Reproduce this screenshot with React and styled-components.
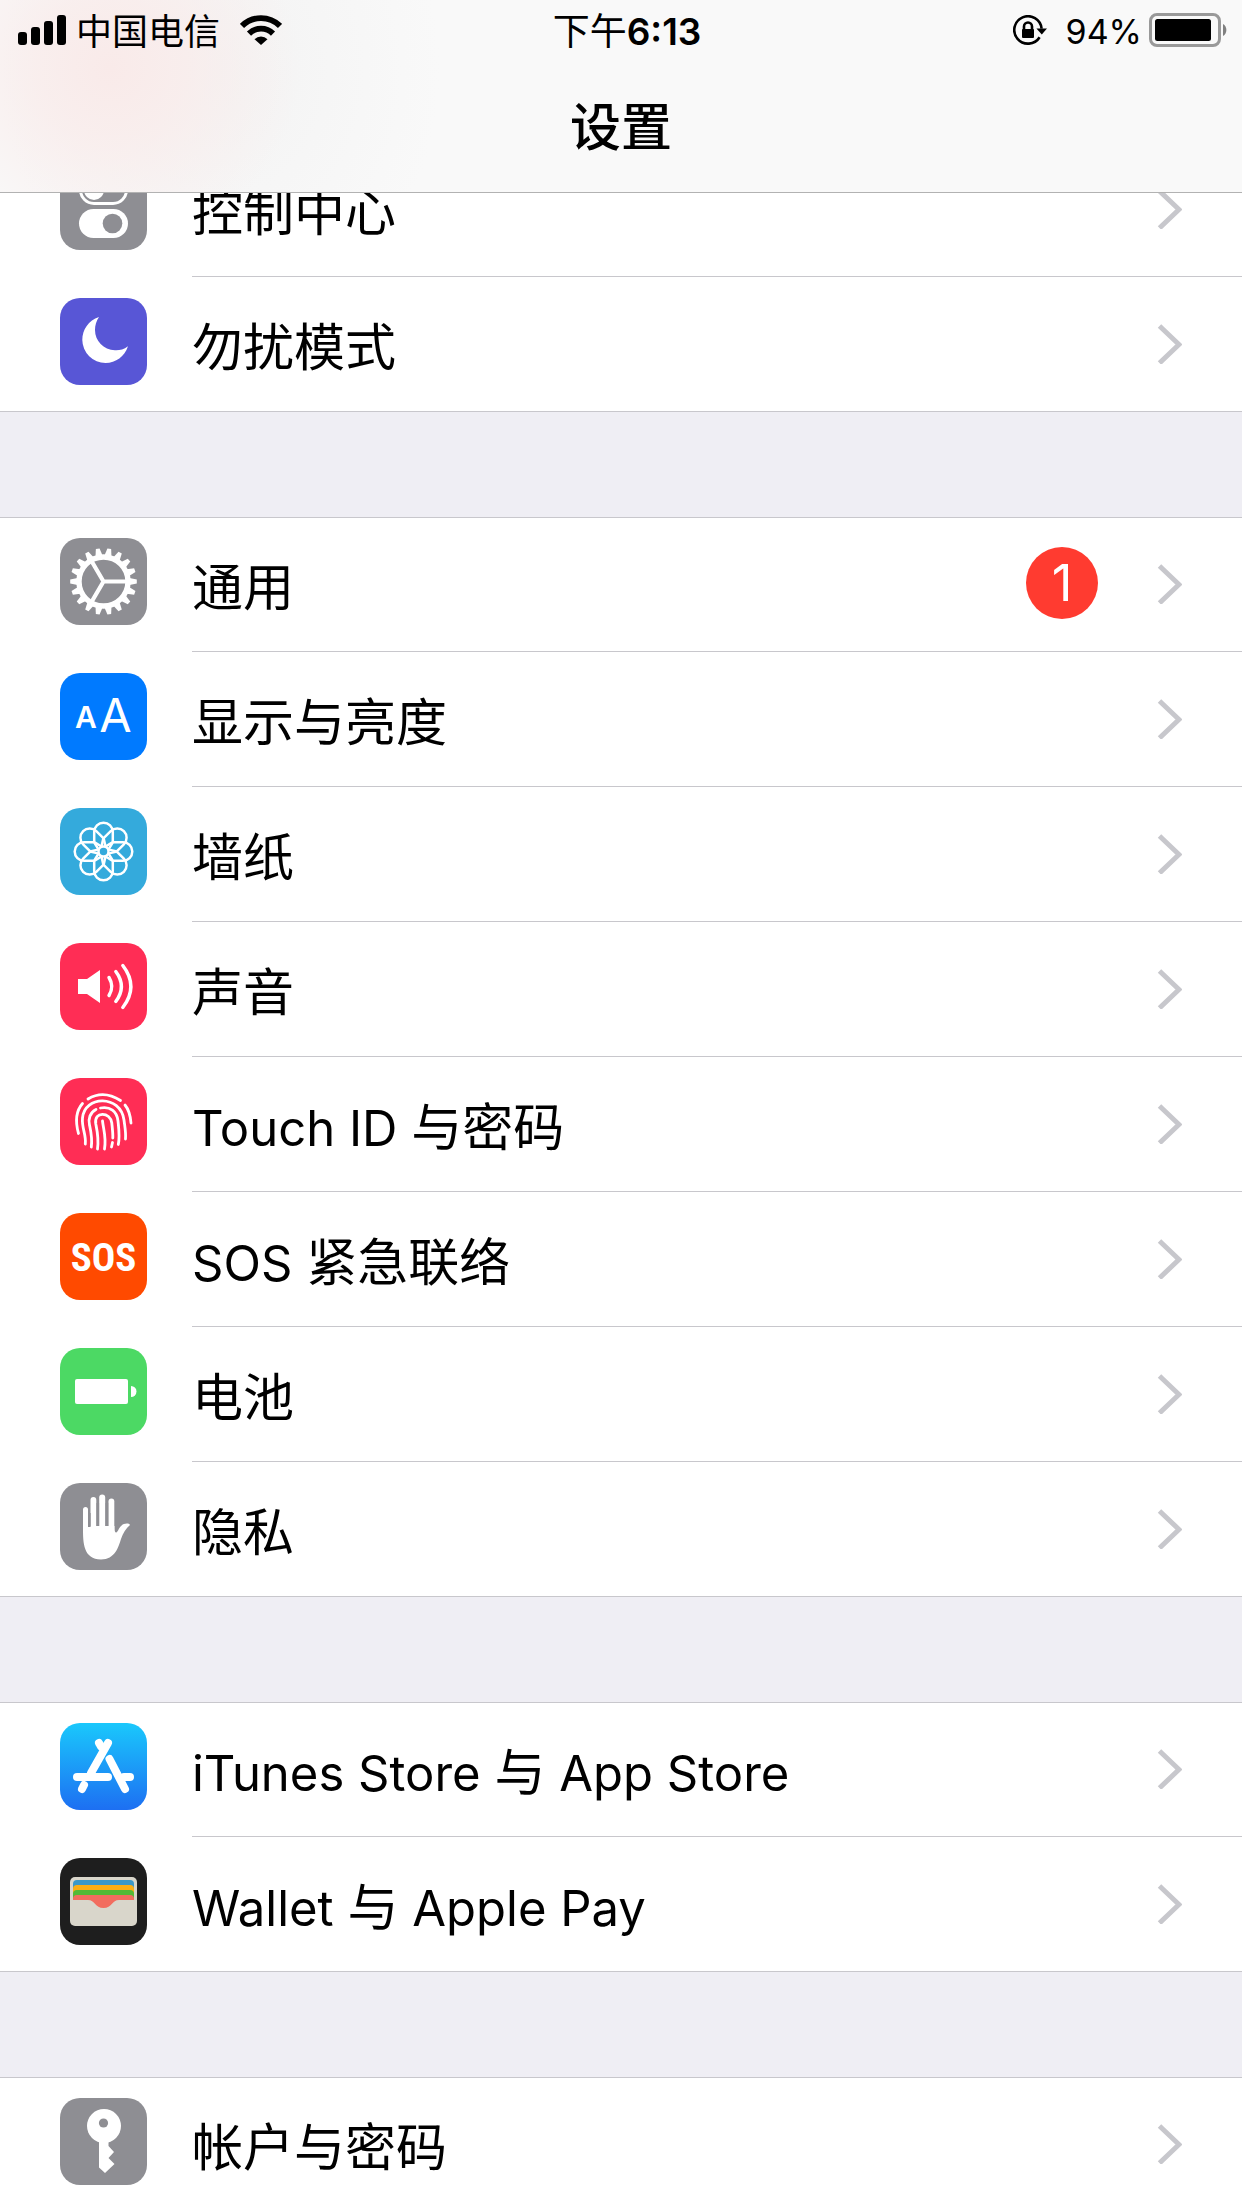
import React from "react";
import styled, { createGlobalStyle } from "styled-components";

const GlobalStyle = createGlobalStyle`
    * {
        box-sizing: border-box;
    }

    body {
        margin: 0;
        background: #efeef4;
        color: #000;
        font-family: Inter, "Noto Sans CJK SC", sans-serif;
    }
`;

const SignalIcon = () => (
    <svg width="48" height="30" viewBox="0 0 48 30" aria-hidden="true">
        <rect x="0" y="17" width="9" height="13" rx="3" />
        <rect x="13" y="12" width="9" height="18" rx="3" />
        <rect x="26" y="6" width="9" height="24" rx="3" />
        <rect x="39" y="0" width="9" height="30" rx="3" />
    </svg>
);

const WifiIcon = () => (
    <svg width="42" height="30" viewBox="0 0 42 30" aria-hidden="true">
        <g fill="none" stroke="#000" strokeWidth="5.8">
            <path d="M2 10.9A27 27 0 0 1 40 10.9" />
            <path d="M9 18.6A17 17 0 0 1 33 18.6" />
        </g>
        <path d="M14.5 24.2A9.2 9.2 0 0 1 27.5 24.2L21 30Z" />
    </svg>
);

const LockIcon = () => (
    <svg width="34" height="30" viewBox="0 0 34 30" aria-hidden="true">
        <g fill="none" stroke="#000" strokeWidth="2.6">
            <path d="M28.6 13.6A13.7 13.7 0 1 0 26.6 22.2" />
            <path d="M11 15V11.5a4 4 0 0 1 8 0v4" />
        </g>
        <path d="M23.4 13.6H34L28.8 19.6Z" />
        <rect x="9" y="14" width="12" height="9" rx="1" />
    </svg>
);

const StatusBatteryIcon = () => (
    <svg width="78" height="34" viewBox="0 0 78 34" aria-hidden="true">
        <rect
            x="1.5"
            y="1.5"
            width="69"
            height="31"
            rx="6.5"
            fill="none"
            stroke="#999"
            strokeWidth="3"
        />
        <rect x="6" y="6" width="56" height="22" rx="2.5" />
        <path d="M74 11a7 7 0 0 1 0 12Z" fill="#808080" />
    </svg>
);

const ChevronIcon = () => (
    <svg width="25" height="40" viewBox="0 0 25 40" aria-hidden="true">
        <path
            d="M2.5 2L22 20.5L2.5 39"
            fill="none"
            stroke="#c7c7cc"
            strokeWidth="5"
        />
    </svg>
);

const ControlGlyph = () => (
    <>
        <rect
            x="20.5"
            y="13.5"
            width="46"
            height="27"
            rx="13.5"
            fill="none"
            stroke="#fff"
            strokeWidth="3"
        />
        <circle cx="34" cy="27" r="10" fill="#fff" />
        <rect x="19" y="46" width="49" height="29" rx="14.5" fill="#fff" />
        <circle cx="52.5" cy="60.5" r="9.8" fill="#8e8e93" />
    </>
);

const MoonGlyph = () => (
    <path
        d="M39 19C28.5 22.5 22.3 31.5 22.3 42A23.3 23.3 0 0 0 45.5 65C56 65 64.5 58.5 68 48.3C63.5 51.6 59.5 52.5 55 52.3C43.5 51.8 35 43 35 32C35 27 36.3 23 39 19Z"
        fill="#fff"
    />
);

const GearGlyph = () => (
    <g stroke="#fff" fill="none">
        <circle cx="43.5" cy="43.5" r="24.5" strokeWidth="5.4" />
        {Array.from({ length: 18 }, (_, i) => (
            <path
                key={i}
                d="M69.5 40L76.8 41.6V45.4L69.5 47Z"
                fill="#fff"
                stroke="none"
                transform={`rotate(${i * 20} 43.5 43.5)`}
            />
        ))}
        <path
            d="M43.5 43.5H67M43.5 43.5L31.5 23M43.5 43.5L31.5 64"
            strokeWidth="4.2"
        />
    </g>
);

const TextSizeGlyph = () => (
    <g fill="#fff" fontFamily="Inter, sans-serif" textAnchor="middle">
        <text x="26" y="55" fontSize="30" fontWeight="600">
            A
        </text>
        <text x="55.5" y="59" fontSize="47" fontWeight="400">
            A
        </text>
    </g>
);

/* each petal is a capsule that tapers towards the centre */
const FlowerGlyph = () => (
    <g fill="none" stroke="#fff" strokeWidth="2.5">
        <circle cx="43.5" cy="43.5" r="5" />
        {Array.from({ length: 8 }, (_, i) => (
            <path
                key={i}
                d="M41.8 38.8L34.2 34V24A9.3 9.3 0 0 1 52.8 24V34L45.2 38.8"
                transform={`rotate(${i * 45} 43.5 43.5)`}
            />
        ))}
    </g>
);

const SoundGlyph = () => (
    <>
        <path d="M18 36H27L40 27V60L27 51H18Z" fill="#fff" />
        <g
            fill="none"
            stroke="#fff"
            strokeWidth="3.4"
            strokeLinecap="round"
        >
            <path d="M49 34.5Q54.5 43.5 49 52.5" />
            <path d="M55.8 28.5Q67 43.5 55.8 58.5" />
            <path d="M62.8 22.5Q79 43.5 62.8 64.5" />
        </g>
    </>
);

const FingerprintGlyph = () => (
    <g fill="none" stroke="#fff" strokeWidth="2.8" strokeLinecap="round">
        <path d="M28 21Q43.5 11.5 60.5 22.5" />
        <path d="M22.5 25.5C15.5 33.5 15 43 18.5 55.5" />
        <path d="M65 27Q70 33 71 45" />
        <path d="M25.3 66C26.5 57 21.5 50 22.5 40C24.5 17 60.5 16.5 64 42C65 50 66 54 65.5 61" />
        <path d="M36 31.5C30 34.5 28 41 29.5 47C31 54 32.5 60 31.3 69" />
        <path d="M40.5 30C50 28 57 33.5 58 43C58.8 51 60 59 58.3 66.5" />
        <path d="M37.5 71C39 60 37 52 35.8 46C33.5 33 50.5 33.5 51.8 45C52.3 50 53 55 52.8 60" />
        <path d="M42.5 43C43.5 52 46.5 59 44.5 71" />
        <path d="M52.5 64.5L51.5 69" />
    </g>
);

const SosGlyph = () => (
    <text
        x="43.5"
        y="57.5"
        fill="#fff"
        fontFamily='"Roboto Condensed", "Liberation Sans Narrow", Roboto, sans-serif'
        fontSize="39"
        fontWeight="700"
        textAnchor="middle"
    >
        SOS
    </text>
);

const BatteryGlyph = () => (
    <g fill="#fff">
        <rect x="15" y="31" width="53" height="25" rx="2" />
        <path d="M71 38A5.5 5.5 0 0 1 71 49Z" />
    </g>
);

const HandGlyph = () => (
    <g fill="#fff">
        <path d="M23 43C23 58 22.5 76.5 41 76.5C55 76.5 58.5 64 61 56C63 50 66 45.5 70 42C69 40 64 40 61 43C58.5 45.5 57.5 50 56 49.5C54.5 49 54.5 46 54.5 43Z" />
        <rect x="23" y="24" width="5" height="24" rx="2.5" />
        <rect x="30.5" y="14" width="5.8" height="34" rx="2.9" />
        <rect x="39.2" y="11.5" width="6" height="36" rx="3" />
        <rect x="48.5" y="15.5" width="5.8" height="34" rx="2.9" />
        <path
            d="M29.3 30V44M37.8 20V43M46.9 20V43"
            stroke="#8e8e93"
            strokeWidth="2.6"
        />
    </g>
);

const AppStoreGlyph = () => (
    <g stroke="#fff" strokeWidth="8" strokeLinecap="round" fill="none">
        <path d="M48 20L31 50" />
        <path d="M39 20L41 23.5" />
        <path d="M17 54H48" />
        <path d="M64 54H70" />
        <path d="M49.5 36L65 66" />
        <path d="M24 62L22 66" />
    </g>
);

const WalletGlyph = () => (
    <>
        <rect x="10" y="19" width="67" height="49" rx="5" fill="#d9d6cb" />
        <path d="M13 42V26a4 4 0 0 1 4-4H70a4 4 0 0 1 4 4V42Z" fill="#3c98c8" />
        <path d="M13 42V31a4 4 0 0 1 4-4H70a4 4 0 0 1 4 4V42Z" fill="#fdae14" />
        <path d="M13 42V36a4 4 0 0 1 4-4H70a4 4 0 0 1 4 4V42Z" fill="#53ba36" />
        <path
            d="M13 42V41a4 4 0 0 1 4-4H70a4 4 0 0 1 4 4V42H59C52 42 52 50 43.5 50S35 42 28 42Z"
            fill="#f26d5f"
        />
    </>
);

const KeyGlyph = () => (
    <>
        <circle cx="44" cy="28" r="17" fill="#fff" />
        <path
            d="M39 40V69.5L45 75L54.5 66L48.5 60L54 54L48.5 48V40Z"
            fill="#fff"
        />
        <circle cx="43.5" cy="25" r="4.6" fill="#8e8e93" />
    </>
);

const groups = [
    [
        { title: "控制中心", color: "#8e8e93", glyph: ControlGlyph },
        { title: "勿扰模式", color: "#5856d6", glyph: MoonGlyph },
    ],
    [
        { title: "通用", color: "#8e8e93", glyph: GearGlyph, badge: 1 },
        { title: "显示与亮度", color: "#007aff", glyph: TextSizeGlyph },
        { title: "墙纸", color: "#34aadc", glyph: FlowerGlyph },
        { title: "声音", color: "#ff2d55", glyph: SoundGlyph },
        { title: "Touch ID 与密码", color: "#ff2d55", glyph: FingerprintGlyph },
        { title: "SOS 紧急联络", color: "#ff4a00", glyph: SosGlyph },
        { title: "电池", color: "#4cd964", glyph: BatteryGlyph },
        { title: "隐私", color: "#8e8e93", glyph: HandGlyph },
    ],
    [
        {
            title: "iTunes Store 与 App Store",
            color: "linear-gradient(#1ac8fc, #1d6ff2)",
            glyph: AppStoreGlyph,
        },
        { title: "Wallet 与 Apple Pay", color: "#1e1e1e", glyph: WalletGlyph },
    ],
    [{ title: "帐户与密码", color: "#8e8e93", glyph: KeyGlyph }],
];

/* latin runs are set a little smaller than the chinese ones */
const MixedText = ({ children }) =>
    children
        .split(/([\x20-\x7e]+)/)
        .filter(Boolean)
        .map((run, index) =>
            /^[\x20-\x7e]/.test(run) ? (
                <Latin key={`run-${index}`}>{run}</Latin>
            ) : (
                run
            )
        );

const SettingsRow = ({ title, color, glyph: Glyph, badge }) => (
    <li>
        <RowLink href="#">
            <IconTile color={color}>
                <svg width="87" height="87" viewBox="0 0 87 87" aria-hidden="true">
                    <Glyph />
                </svg>
            </IconTile>
            <RowBody>
                <RowTitle>
                    <MixedText>{title}</MixedText>
                </RowTitle>
                {badge && <Badge>{badge}</Badge>}
                <ChevronIcon />
            </RowBody>
        </RowLink>
    </li>
);

export default function App() {
    return (
        <Screen>
            <GlobalStyle />
            <Header>
                <StatusBar>
                    <StatusLeft>
                        <SignalIcon />
                        <Carrier>中国电信</Carrier>
                        <WifiIcon />
                    </StatusLeft>
                    <Clock>
                        下午<ClockDigits>6:13</ClockDigits>
                    </Clock>
                    <StatusRight>
                        <LockIcon />
                        <BatteryLevel>94%</BatteryLevel>
                        <StatusBatteryIcon />
                    </StatusRight>
                </StatusBar>
                <NavTitle>设置</NavTitle>
            </Header>
            <Content>
                {groups.map((rows, index) => (
                    <Group key={`group-${index}`}>
                        {rows.map((row) => (
                            <SettingsRow key={row.title} {...row} />
                        ))}
                    </Group>
                ))}
            </Content>
        </Screen>
    );
}

const Screen = styled.div`
    display: flex;
    flex-direction: column;
    height: 100vh;
    overflow: hidden;
`;

const Header = styled.header`
    flex: none;
    border-bottom: 1px solid #b2b2b2;
    background:
        radial-gradient(
            ellipse 190px 180px at 110px 68px,
            #f9eae9 0%,
            rgba(249, 236, 235, 0.8) 40%,
            rgba(249, 244, 243, 0) 100%
        ),
        radial-gradient(
            ellipse 220px 260px at 220px 70px,
            #f3f3f3 0%,
            rgba(249, 249, 249, 0) 100%
        ),
        #f9f9f9;
`;

const StatusBar = styled.div`
    display: grid;
    grid-template-columns: 1fr auto 1fr;
    align-items: center;
    height: 60px;
    padding: 0 15px 0 18px;
    font-size: 36px;
    line-height: 56px;
`;

const StatusLeft = styled.div`
    display: flex;
    align-items: center;
`;

const StatusRight = styled.div`
    display: flex;
    align-items: center;
    justify-content: flex-end;
`;

const Carrier = styled.span`
    margin: 0 20px 0 10px;
    padding-top: 3px;
`;

const Clock = styled.time`
    padding: 3px 0 0 9px;
    font-size: 37px;
`;

const ClockDigits = styled.span`
    font-weight: 600;
`;

const BatteryLevel = styled.span`
    margin: 0 7px 0 19px;
    padding-top: 3px;
    font-size: 34px;
`;

const NavTitle = styled.h1`
    margin: 0;
    height: 132px;
    padding-top: 2px;
    font-size: 51px;
    font-weight: 500;
    line-height: 132px;
    text-align: center;
`;

const Content = styled.main`
    flex: 1;
    min-height: 0;
    overflow: hidden;
`;

/* the list is scrolled a little, so the first row is cut by the header */
const Group = styled.ul`
    margin: 0 0 105px;
    padding: 0;
    list-style: none;
    background: #fff;
    box-shadow:
        inset 0 1px #c8c7cc,
        inset 0 -1px #c8c7cc;

    &:first-child {
        margin-top: -51px;
    }
`;

const RowLink = styled.a`
    display: flex;
    align-items: center;
    gap: 45px;
    height: 135px;
    padding-left: 60px;
    color: inherit;
    text-decoration: none;
`;

const IconTile = styled.span`
    flex: none;
    width: 87px;
    height: 87px;
    margin-bottom: 6px;
    border-radius: 20px;
    background: ${({ color }) => color};
    overflow: hidden;

    svg {
        display: block;
    }
`;

const RowBody = styled.span`
    display: flex;
    flex: 1;
    align-items: center;
    align-self: stretch;
    padding-right: 60px;
    border-bottom: 1px solid #c8c7cc;
`;

const RowTitle = styled.span`
    flex: 1;
    padding-top: 8px;
    font-size: 51px;
    line-height: 72px;
`;

const Latin = styled.span`
    font-size: 49px;
    white-space: pre;
`;

const Badge = styled.span`
    width: 72px;
    height: 72px;
    margin: 0 59px 2px 0;
    border-radius: 50%;
    background: #ff3b30;
    color: #fff;
    font-size: 51px;
    line-height: 72px;
    text-align: center;
`;
